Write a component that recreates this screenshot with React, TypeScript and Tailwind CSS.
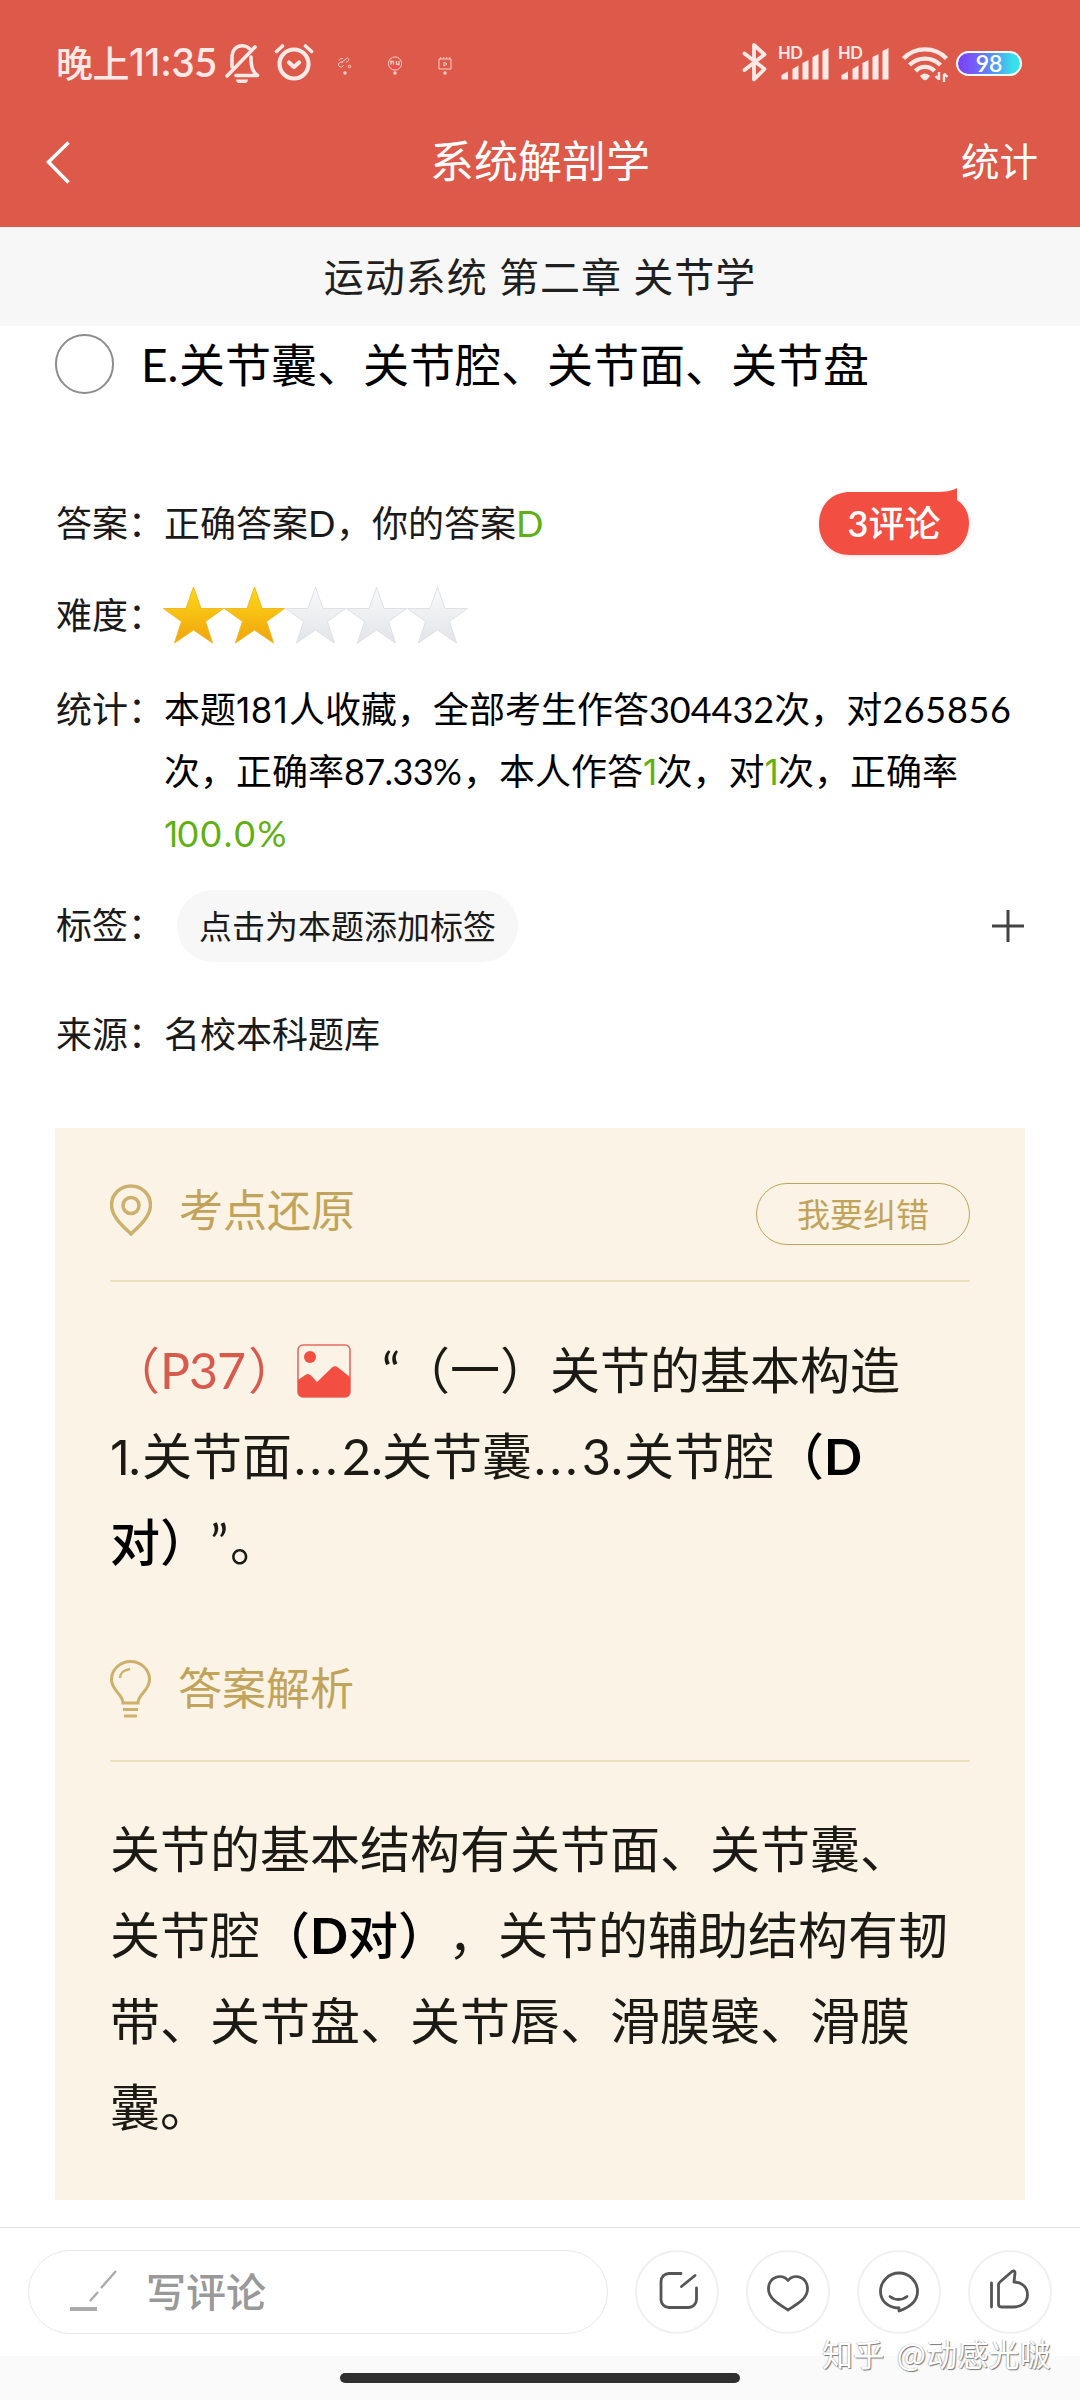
import type { ReactNode } from "react";

const cjk = "font-['Lato','Noto_Sans_CJK_SC',sans-serif]";

function StatusBar() {
  return (
    <div className="flex h-[98px] items-start pl-14 pr-[58px] pt-[41px] text-[#ffe9e6]">
      <div className="flex h-[42px] w-[162px] items-center whitespace-nowrap text-[37px] font-medium leading-[42px]">
        <span className="font-['Noto_Sans_CJK_SC',sans-serif] tracking-[-0.5px]">晚上</span>
        <span className="font-['Inter',sans-serif] text-[38px] font-medium tracking-[-0.2px]">11:</span>
        <span className="font-['Lato',sans-serif] text-[40px] font-semibold tracking-[-0.4px]">35</span>
      </div>
      {/* Silent mode */}
      <svg className="ml-[6px] mt-[2px] h-[40px] w-[36px]" viewBox="0 0 36 40" fill="none" stroke="currentColor" strokeWidth="3.600" strokeLinecap="round" strokeLinejoin="round">
        <path d="M3 33L31 4" />
        <path d="M8 24V15.500C8 7 12 2.800 18 2.800c3 0 5.500 1 7.500 3" />
        <path d="M27 14c0 11 2 15 6.500 18.500H12" />
        <path d="M12 36.500h12a6 4.500 0 0 1-12 0z" fill="currentColor" stroke="none" />
      </svg>
      {/* Alarm */}
      <svg className="ml-[14px] mt-[1px] h-[40px] w-[40px]" viewBox="0 0 40 40" fill="none" stroke="currentColor" strokeWidth="4.200" strokeLinecap="round" strokeLinejoin="round">
        <circle cx="20" cy="22" r="14.500" />
        <path d="M15 20.500l5 4.500 5-4.500" />
        <path d="M2.500 9.500l6-5.500M37.500 9.500l-6-5.500" strokeWidth="3.600" />
      </svg>
      <div className="ml-[23px] mt-[15px] flex gap-[34px] opacity-80">
        <svg className="h-5 w-4" viewBox="0 0 16 20" fill="none" stroke="currentColor" strokeWidth="1">
          <path d="M6 2.500a3.500 3.500 0 0 0-4 2M6 7a2.500 2.500 0 1 0 .5 2M5 6l6-4.500M9 6c3 0 3-3 2.500-3.500" />
          <circle cx="12.500" cy="10.500" r="1.200" />
          <circle cx="8" cy="17" r="1.800" fill="currentColor" stroke="none" />
        </svg>
        <svg className="h-5 w-4" viewBox="0 0 16 20" fill="none" stroke="currentColor" strokeWidth="1">
          <circle cx="8" cy="7.500" r="6.600" />
          <path d="M3 5.500h4M4 5.500v3M6.500 5.500v3M9.500 5v3.500M12 5v3.500H9.500" strokeWidth="1.300" />
          <path d="M5 10.500h6" stroke="#ff3f66" strokeWidth="2" />
          <circle cx="8" cy="17" r="1.800" fill="currentColor" stroke="none" />
        </svg>
        <svg className="h-5 w-4" viewBox="0 0 16 20" fill="none" stroke="currentColor" strokeWidth="1">
          <path d="M2 3h12v10H2zM3 3l1-2M6 3l1-2M9 3l1-2M12 3l1-2" />
          <path d="M7 6l3 2-3 2z" />
          <circle cx="8" cy="17" r="1.800" fill="currentColor" stroke="none" />
        </svg>
      </div>
      <div className="ml-auto flex">
        <svg className="mr-[3px] h-[42px] w-[27px]" viewBox="0 0 27 42" fill="none" stroke="currentColor" strokeWidth="3.800" strokeLinecap="round" strokeLinejoin="round">
          <path d="M3.500 12.500l20 15.500-10.500 10.500V4l10.500 9.500-20 15.500" />
        </svg>
        <Signal />
        <Signal />
        <svg className="ml-[10px] mt-[3px] h-[38px] w-[48px]" viewBox="0 0 48 38" fill="none" stroke="currentColor" strokeWidth="4.400">
          <path d="M2.500 14.500a30 30 0 0 1 43 0" />
          <path d="M8.500 21a22 22 0 0 1 31 0" />
          <path d="M14.500 27a13 13 0 0 1 19 0" />
          <path d="M19 32c3-3.500 7-3.500 10 0l-3 3.500c-1.500 1-2.500 1-4 0z" fill="currentColor" stroke="none" />
          <path d="M38 28v8M34.500 32l3.500 3.500M43 38v-8M46.500 33l-3.500-3.500" strokeWidth="2.400" />
        </svg>
        <div className="ml-[7px] mt-[10px] flex h-[25px] w-[66px] items-center justify-center rounded-full border-2 border-current bg-[linear-gradient(90deg,#7a3ff2_0%,#7460fb_28%,#4f9cf5_60%,#37e3ea_90%)] font-['Lato',sans-serif] text-[23px] font-semibold leading-none text-white">
          98
        </div>
      </div>
    </div>
  );
}

function Signal() {
  return (
    <div className="relative ml-[7px] h-[42px] w-[53px]">
      <span className="absolute left-0 top-[2px] font-['Lato',sans-serif] text-[16.500px] font-bold leading-[20px] tracking-[-0.500px]">HD</span>
      <svg className="h-full w-full" viewBox="0 -4 53 42" fill="currentColor">
        <path d="M3.500 30l6.500-3.500v8h-6.500zM14.500 24l6-3.500v14h-6zM24.500 18l6-3v19.500h-6zM34.500 12l6-3v25.500h-6zM44.500 6l6-3v31.500h-6z" />
      </svg>
    </div>
  );
}

function Header() {
  return (
    <header className="h-[227px] bg-[#dd594a]">
      <StatusBar />
      <div className="grid h-[129px] grid-cols-3 items-start px-[42px] pt-[35px] text-white">
        <svg className="mt-[4px] h-[48px] w-[30px]" viewBox="0 0 30 48" fill="none" stroke="currentColor" strokeWidth="3.500">
          <path d="M26.500 5.500L6.500 25l20 20.500" />
        </svg>
        <h1 className="justify-self-center whitespace-nowrap text-[44px] leading-[56px]">系统解剖学</h1>
        <span className="justify-self-end whitespace-nowrap text-[38.500px] leading-[56px]">统计</span>
      </div>
    </header>
  );
}

function Row({ label, className, children }: { label: string; className: string; children: ReactNode }) {
  return (
    <div className={`flex items-start text-[36px] leading-[62px] text-[#1a1a1a] ${className}`}>
      <span className="w-[109px] shrink-0 whitespace-nowrap pl-px">{label}：</span>
      {children}
    </div>
  );
}

const starPath = "M30.500 0L38 21.500L60.500 21.500L42.500 34.500L49.500 56L30.500 43L11.500 56L18.500 34.500L.5 21.500L23 21.500Z";

function Stars({ value }: { value: number }) {
  return (
    <div className="-ml-px mt-[3px] flex">
      {[0, 1, 2, 3, 4].map((i) => (
        <svg key={i} className="h-[58px] w-[61px]" viewBox="0 0 61 58">
          <defs>
            <linearGradient id={`star-${i}`} x1="0" y1="0" x2="0" y2="1">
              <stop offset="0" stopColor={i < value ? "#fdd91a" : "#f8f9fa"} />
              <stop offset="1" stopColor={i < value ? "#f0a30c" : "#e2e5e8"} />
            </linearGradient>
          </defs>
          <path d={starPath} fill={`url(#star-${i})`} stroke={i < value ? "#f2b822" : "#dfe2e4"} strokeWidth="1" />
        </svg>
      ))}
    </div>
  );
}

function Green({ children }: { children: ReactNode }) {
  return <span className="text-[#5fb010]">{children}</span>;
}

// narrow figure one
function One() {
  return <span className="font-['Inter',sans-serif] text-[0.97em] leading-none tracking-[-0.02em]">1</span>;
}

function Question() {
  return (
    <section className="h-[802px] px-[55px]">
      <div className="flex h-[68px] items-start pt-[8px]">
        <span className="h-[60px] w-[59px] rounded-full border-2 border-[#8c8c8c]" />
        <span className="ml-[27px] flex whitespace-nowrap text-[46px] leading-[61px] text-black">
          <span className="w-[38px]">E.</span>
          关节囊、关节腔、关节面、关节盘
        </span>
      </div>
      <div className="mt-[98px] flex h-[62px] items-start justify-between">
        <Row label="答案" className="">
          <span className="whitespace-nowrap">
            正确答案<span className="inline-block w-[28px]">D</span>，你的答案<Green>D</Green>
          </span>
        </Row>
        <div className="relative mr-[55px] -mt-[4px] h-[70px] w-[152px]">
          <svg className="absolute inset-0 h-full w-full drop-shadow-[0_2px_2px_rgba(242,78,65,0.15)]" viewBox="0 0 152 70">
            <path d="M32 4H118C127 4 134 3 139 0V12C147 17 151 26 151 35C151 54 137 67 119 67H32C14 67 1 54 1 36C1 17 14 4 32 4Z" fill="#f24e41" />
          </svg>
          <span className="relative flex h-[70px] items-center justify-center whitespace-nowrap text-[36px] font-medium text-white">
            <span className="font-semibold">3</span>评论
          </span>
        </div>
      </div>
      <Row label="难度" className="mt-[30px]">
        <Stars value={2} />
      </Row>
      <Row label="统计" className="mt-[32px]">
        <div className="whitespace-nowrap text-black">
          <div className="h-[62px]">
            本题<One /><span className="mx-[1.500px]">8</span><One /><span className="ml-[2px]">人收藏，全部考生作答304432次，对</span><span className="tracking-[0.700px]">265856</span>
          </div>
          <div className="h-[62px]">
            次，正确率<span className="inline-block w-[119px] tracking-[-0.600px]">87.33%</span>，本人作答<Green><One /></Green>次，对<Green><One /></Green>次，正确率
          </div>
          <div className="h-[62px]"><Green><One /><span className="tracking-[2.200px]">00.0%</span></Green></div>
        </div>
      </Row>
      <div className="mt-[30px] flex items-center">
        <Row label="标签" className="">
          <span className="ml-[13px] mt-[-4px] flex h-[72px] w-[341px] items-center justify-center whitespace-nowrap rounded-full bg-[#f7f7f7] text-[33px]">
            点击为本题添加标签
          </span>
        </Row>
        <svg className="-mt-[5px] ml-auto h-[34px] w-[34px]" viewBox="0 0 34 34" stroke="#444" strokeWidth="3">
          <path d="M1 17h32M17 1v32" />
        </svg>
      </div>
      <Row label="来源" className="mt-[41px]">
        <span>名校本科题库</span>
      </Row>
    </section>
  );
}

function Analysis() {
  return (
    <section className="mx-[55px] h-[1072px] bg-[#faf3e6] px-[55px] pt-[55px] text-[#1c1a14]">
      <div className="flex h-[99px] items-start border-b-2 border-[#ebdfbd] text-[#c1a359]">
        <svg className="mt-[1px] h-[52px] w-[42px]" viewBox="0 0 42 52" fill="none" stroke="#ccb06c" strokeWidth="3.500">
          <path d="M21 50C15 44 1.500 33.500 1.500 21A19.500 19 0 0 1 40.500 21C40.500 33.500 27 44 21 50Z" />
          <circle cx="21" cy="21.500" r="8" />
        </svg>
        <h2 className="ml-[27px] whitespace-nowrap text-[44px] leading-[54px]">考点还原</h2>
        <button className="ml-auto h-[62px] w-[214px] whitespace-nowrap rounded-full border border-[#c1a359] text-[33px] leading-[57px]">
          我要纠错
        </button>
      </div>
      <div className="mt-[45px] whitespace-nowrap text-[50px] leading-[86px]">
        <div className="flex h-[86px]">
          <span className="flex text-[#d85a4d]">
            （<span className="w-[88px] tracking-[-1px]">P37</span>）
          </span>
          <svg className="-ml-px mt-[17px] h-[54px] w-[54px]" viewBox="0 0 54 54">
            <rect x="1" y="1" width="52" height="52" rx="5" fill="none" stroke="#e8695e" strokeWidth="1.600" />
            <circle cx="13" cy="13" r="6" fill="#f24e41" />
            <path d="M1 36L9 30.500Q11.500 29 14 31.500L20 38L35 23.500Q38 21 41 23.500L53 33V48Q53 53 48 53H6Q1 53 1 48Z" fill="#f24e41" />
          </svg>
          <span className="ml-[31px] w-[18px]">“</span>
          （一）关节的基本构造
        </div>
        <div className="flex h-[86px]">
          <span className="w-[32px]"><One />.</span>关节面
          <span className="w-[50px] pl-[2px]"><span className="tracking-[4px]">...</span></span>
          <span className="w-[40px]">2.</span>关节囊
          <span className="w-[50px] pl-[2px]"><span className="tracking-[4px]">...</span></span>
          <span className="w-[42px]">3.</span>关节腔
          <b className="font-medium text-black">（<span className="font-bold">D</span></b>
        </div>
        <div className="flex h-[86px]">
          <b className="font-medium text-black">对）</b>
          <span className="w-[20px]">”</span>。
        </div>
      </div>
      <div className="mt-[73px] flex h-[104px] items-start border-b-2 border-[#ebdfbd] text-[#c1a359]">
        <svg className="mt-[2px] h-[58px] w-[41px]" viewBox="0 0 41 58" fill="none" stroke="#ccb06c" strokeWidth="3">
          <path d="M13 43C13 34 1.500 31 1.500 19.500A19 18 0 0 1 39.500 19.500C39.500 31 28 34 28 43Z" />
          <path d="M10 18c0-5 2.500-7.500 10-9" strokeWidth="2.500" />
          <path d="M13 49.500h15M14 56h13" />
        </svg>
        <h2 className="ml-[27px] whitespace-nowrap text-[44px] leading-[60px]">答案解析</h2>
      </div>
      <div className="mt-[44px] whitespace-nowrap text-[50px] leading-[86px]">
        <div>关节的基本结构有关节面、关节囊、</div>
        <div>
          关节腔<b className="font-medium text-black">（<span className="font-bold">D</span>对）</b>，关节的辅助结构有韧
        </div>
        <div>带、关节盘、关节唇、滑膜襞、滑膜</div>
        <div>囊。</div>
      </div>
    </section>
  );
}

function CircleButton({ children }: { children: ReactNode }) {
  return (
    <button className="flex h-[84px] w-[84px] items-center justify-center rounded-full border-2 border-[#f0f0f0]">
      <svg className="h-[48px] w-[48px]" viewBox="0 0 48 48" fill="none" stroke="#555" strokeWidth="2.800" strokeLinecap="round" strokeLinejoin="round">
        {children}
      </svg>
    </button>
  );
}

function BottomBar() {
  return (
    <footer className="relative mt-[27px] h-[173px] border-t border-[#e4e4e4]">
      <div className="flex h-[128px] items-start gap-[27px] pl-[28px] pt-[22px]">
        <div className="flex h-[84px] w-[580px] items-center rounded-full border border-[#e9e9e9] pl-[39px]">
          <svg className="h-[44px] w-[52px]" viewBox="0 0 52 44" stroke="#aaa">
            <path d="M2 39h27" strokeWidth="4" />
            <path d="M22 31l8-9M33 18L48 1" strokeWidth="2.400" />
          </svg>
          <span className="ml-[26px] whitespace-nowrap text-[40px] font-medium leading-[60px] text-[#999]">写评论</span>
        </div>
        <CircleButton>
          <path d="M28 5.500H16a8 8 0 0 0-8 8V31a8 8 0 0 0 8 8.500h19a8 8 0 0 0 8.500-8V20M28.500 18.500L42 7.500" />
        </CircleButton>
        <CircleButton>
          <path d="M24 12.500C18 5 4.500 8.500 4.500 21c0 9.500 10 15 19.500 21 9.500-6 19.500-11.500 19.500-21C43.500 8.500 30 5 24 12.500z" />
        </CircleButton>
        <CircleButton>
          <path d="M23.500 40C12 39.500 5.500 32 5.500 23.500a18.500 18.500 0 0 1 37 0c0 9-7 15.500-18.500 19.500v-3" />
          <path d="M15 28.500c5 4 12 4 17 0" />
        </CircleButton>
        <CircleButton>
          <path d="M5.500 15v24M12.500 36V17q0-2 2-3.500L26 3.500q3-1.500 3 1.500l-1 9c7 0 13.500 4.500 13.500 12.500s-6 12.500-13.500 12.500H15.500q-3 0-3-3z" />
        </CircleButton>
      </div>
      <div className="h-[44px] bg-[#fafafa] pt-[17px]">
        <div className="mx-auto h-[10px] w-[400px] rounded-full bg-[#2f2f2f]" />
      </div>
      <span className="absolute right-[29px] top-[103px] whitespace-nowrap font-['Noto_Sans_CJK_SC',sans-serif] text-[31px] leading-[44px] tracking-[0.200px] text-white [text-shadow:1px_1px_1px_#777,-0.5px_-0.5px_1px_#aaa]">
        知乎<span className="ml-[5px]"> @</span>动感光啵
      </span>
    </footer>
  );
}

export default function App() {
  return (
    <main className={`h-[2400px] w-[1080px] overflow-hidden bg-white [text-spacing-trim:space-all] ${cjk}`}>
      <Header />
      <div className="flex h-[99px] items-center justify-center bg-[#f7f7f7] text-[40px] tracking-[1px] text-[#1f1f1f]">
        运动系统 第二章 关节学
      </div>
      <Question />
      <Analysis />
      <BottomBar />
    </main>
  );
}
